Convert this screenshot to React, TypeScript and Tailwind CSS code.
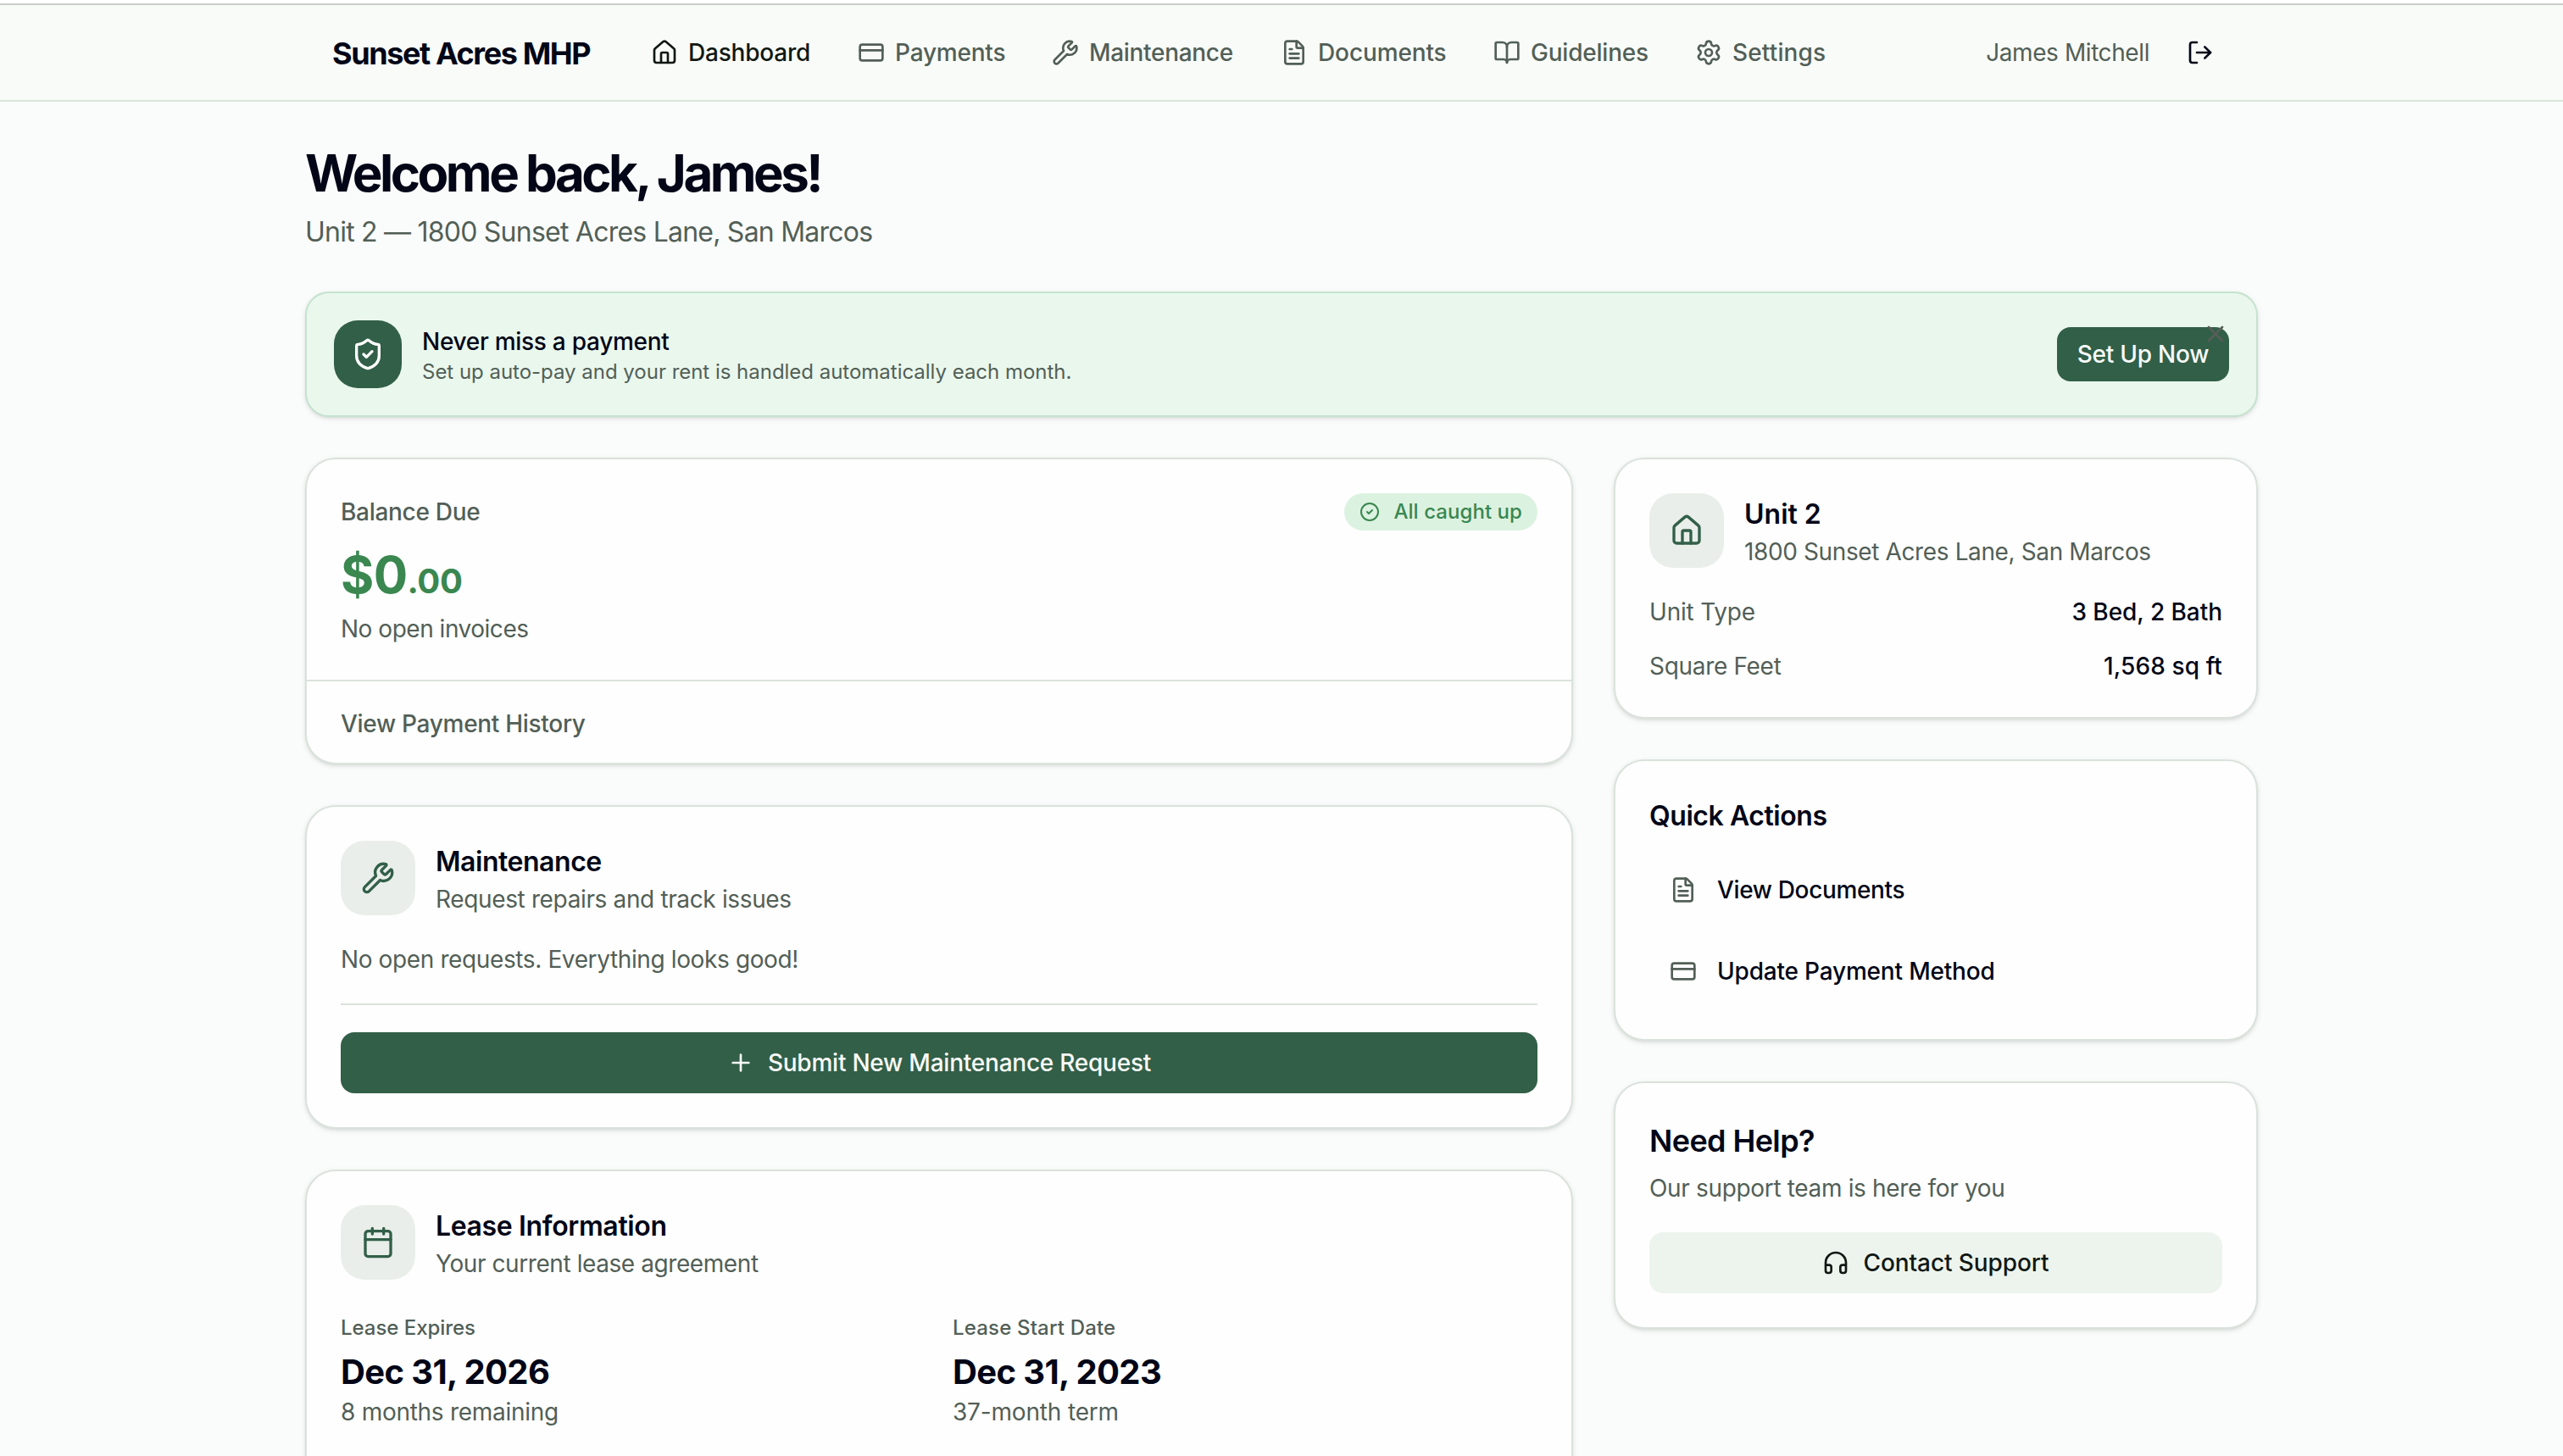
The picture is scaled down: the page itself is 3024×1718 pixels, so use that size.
import type { ReactNode } from "react";
import {
  BookOpen,
  Calendar,
  CircleCheck,
  CreditCard,
  FileText,
  Headphones,
  House,
  LogOut,
  Plus,
  Settings,
  ShieldCheck,
  Wrench,
  X,
} from "lucide-react";
import type { LucideIcon } from "lucide-react";
import clsx from "clsx";

const navItems: { label: string; icon: LucideIcon; text: string; active?: boolean }[] = [
  { label: "Dashboard", icon: House, text: "w-[144px] tracking-[-0.2px]", active: true },
  { label: "Payments", icon: CreditCard, text: "w-[129px] tracking-[-0.2px]" },
  { label: "Maintenance", icon: Wrench, text: "w-[170px] tracking-[-0.31px]" },
  { label: "Documents", icon: FileText, text: "w-[151px] tracking-[-0.12px]" },
  { label: "Guidelines", icon: BookOpen, text: "w-[138px] tracking-[-0.22px]" },
  { label: "Settings", icon: Settings, text: "w-[111px] tracking-[0.15px]" },
];

function Header() {
  return (
    <header className="border-t-2 border-b-2 border-t-[#cbcccb] border-b-[#d9e4db] bg-[#f9fbf8]">
      <div className="mx-auto flex h-28 max-w-[2304px] items-center px-8">
        <div className="w-[376px] pt-0.5 text-[36px] leading-none font-bold tracking-[-1.4px] whitespace-nowrap">
          Sunset Acres MHP
        </div>
        <nav className="flex items-center gap-14">
          {navItems.map(({ label, icon: Icon, text, active }) => (
            <a
              key={label}
              className={clsx(
                "flex items-center gap-3 text-[28px] leading-10 font-medium",
                active ? "text-[#111813]" : "text-[#525f57]",
              )}
            >
              <Icon className="size-8" />
              <span className={clsx("whitespace-nowrap", text)}>{label}</span>
            </a>
          ))}
        </nav>
        <div className="ml-auto flex items-center gap-11 pr-5">
          <span className="text-[28px] leading-10 tracking-[-0.41px] text-[#525f57]">James Mitchell</span>
          <LogOut className="size-8" />
        </div>
      </div>
    </header>
  );
}

function AutoPayBanner() {
  return (
    <section className="relative mt-[46px] flex items-center gap-6 rounded-[28px] border-2 border-[#c4e3ce] bg-[#eaf7ed] p-8 shadow-[0_2px_6px_rgba(0,0,0,0.1),0_2px_4px_-2px_rgba(0,0,0,0.1)]">
      <div className="flex size-20 items-center justify-center rounded-[28px] bg-[#325f48] text-white">
        <ShieldCheck className="size-10" />
      </div>
      <div className="pt-px">
        <p className="text-[28px] leading-10 font-medium tracking-[-0.28px]">Never miss a payment</p>
        <p className="text-2xl leading-8 tracking-[-0.02px] text-[#525f57]">
          Set up auto-pay and your rent is handled automatically each month.
        </p>
      </div>
      <button className="ml-auto h-16 w-[203px] rounded-2xl bg-[#325f48] text-center text-[28px] font-medium tracking-[-0.23px] whitespace-nowrap text-[#f8fbf8]">
        Set Up Now
      </button>
      <X className="absolute top-8 right-8 size-8 text-[#565d57]" />
    </section>
  );
}

function Card({ className, children }: { className?: string; children: ReactNode }) {
  return (
    <section
      className={clsx(
        "rounded-[36px] border-2 border-[#dae2dc] bg-[#fefefe] shadow-[0_2px_6px_rgba(0,0,0,0.1),0_2px_4px_-2px_rgba(0,0,0,0.1)]",
        className,
      )}
    >
      {children}
    </section>
  );
}

function CardTitle({
  icon: Icon,
  title,
  titleTracking,
  subtitle,
  subtitleTracking,
}: {
  icon: LucideIcon;
  title: string;
  titleTracking: string;
  subtitle: string;
  subtitleTracking: string;
}) {
  return (
    <div className="flex items-center gap-6">
      <div className="flex size-[88px] items-center justify-center rounded-[28px] bg-[#e9eeea] text-[#325f48]">
        <Icon className="size-10" />
      </div>
      <div className="whitespace-nowrap">
        <h2 className={clsx("text-[32px] leading-[50px] font-semibold", titleTracking)}>{title}</h2>
        <p className={clsx("text-[28px] leading-[38px] text-[#525f57]", subtitleTracking)}>{subtitle}</p>
      </div>
    </div>
  );
}

function BalanceCard() {
  return (
    <Card>
      <div className="p-10">
        <div className="flex items-center justify-between">
          <span className="text-[28px] leading-10 font-medium tracking-[-0.3px] text-[#525f57]">Balance Due</span>
          <span className="flex h-11 items-center gap-4 rounded-full bg-[#dcf2e0] px-[18px] text-2xl font-medium tracking-[0.06px] text-[#3a8750]">
            <CircleCheck className="size-6" />
            All caught up
          </span>
        </div>
        <p className="mt-4 h-[72px] text-[60px] leading-[72px] font-bold tracking-[-0.6px] text-[#3a8750]">
          $0<span className="text-[40px] tracking-[-0.4px]">.00</span>
        </p>
        <p className="mt-2 text-[28px] leading-10 tracking-[-0.48px] text-[#525f57]">No open invoices</p>
      </div>
      <div className="flex h-[98px] items-center border-t-2 border-[#dae2dc] px-10 pt-1">
        <a className="text-[28px] leading-10 font-medium tracking-[-0.3px] text-[#525f57]">View Payment History</a>
      </div>
    </Card>
  );
}

function MaintenanceCard() {
  return (
    <Card className="p-10">
      <CardTitle
        icon={Wrench}
        title="Maintenance"
        titleTracking="tracking-[-0.46px]"
        subtitle="Request repairs and track issues"
        subtitleTracking="tracking-[-0.36px]"
      />
      <p className="mt-8 text-[28px] leading-10 tracking-[-0.38px] text-[#525f57]">
        No open requests. Everything looks good!
      </p>
      <div className="mt-8 border-t-2 border-[#dae2dc] pt-8">
        <button className="flex h-[72px] w-full items-center justify-center gap-4 rounded-2xl bg-[#325f48] text-[28px] font-medium tracking-[-0.23px] text-[#f8fbf8]">
          <Plus className="size-8" />
          Submit New Maintenance Request
        </button>
      </div>
    </Card>
  );
}

function LeaseCard() {
  const terms = [
    {
      label: "Lease Expires",
      labelTracking: "tracking-[-0.04px]",
      date: "Dec 31, 2026",
      note: "8 months remaining",
      noteTracking: "tracking-[-0.28px]",
    },
    {
      label: "Lease Start Date",
      labelTracking: "tracking-[0.17px]",
      date: "Dec 31, 2023",
      note: "37-month term",
      noteTracking: "tracking-[-0.17px]",
    },
  ];
  return (
    <Card className="h-[480px] p-10">
      <CardTitle
        icon={Calendar}
        title="Lease Information"
        titleTracking="tracking-[-0.36px]"
        subtitle="Your current lease agreement"
        subtitleTracking="tracking-[-0.42px]"
      />
      <div className="mt-10 grid grid-cols-2 gap-8">
        {terms.map((t) => (
          <div key={t.label}>
            <p className={clsx("text-2xl leading-[34px] font-medium text-[#525f57]", t.labelTracking)}>{t.label}</p>
            <p className="mt-1.5 text-[40px] leading-[58px] font-bold tracking-[-0.62px]">{t.date}</p>
            <p className={clsx("text-[28px] leading-[37px] text-[#525f57]", t.noteTracking)}>{t.note}</p>
          </div>
        ))}
      </div>
    </Card>
  );
}

function UnitCard() {
  return (
    <Card className="p-10">
      <CardTitle
        icon={House}
        title="Unit 2"
        titleTracking="tracking-normal"
        subtitle="1800 Sunset Acres Lane, San Marcos"
        subtitleTracking="tracking-[-0.38px]"
      />
      <dl className="mt-8 grid gap-6 text-[28px] leading-10">
        <div className="flex justify-between">
          <dt className="tracking-[-0.2px] text-[#525f57]">Unit Type</dt>
          <dd className="font-medium tracking-[-0.05px]">3 Bed, 2 Bath</dd>
        </div>
        <div className="flex justify-between">
          <dt className="tracking-[-0.31px] text-[#525f57]">Square Feet</dt>
          <dd className="font-medium tracking-[0.1px]">1,568 sq ft</dd>
        </div>
      </dl>
    </Card>
  );
}

function QuickActionsCard() {
  return (
    <Card className="p-10">
      <h2 className="text-[32px] leading-[50px] font-semibold tracking-[-0.45px]">Quick Actions</h2>
      <div className="mt-[22px] grid gap-4 text-[28px] font-medium">
        <a className="flex h-20 items-center gap-6 px-6 tracking-[-0.36px]">
          <FileText className="size-8 text-[#525f57]" />
          View Documents
        </a>
        <a className="flex h-20 items-center gap-6 px-6 tracking-[-0.19px]">
          <CreditCard className="size-8 text-[#525f57]" />
          Update Payment Method
        </a>
      </div>
    </Card>
  );
}

function HelpCard() {
  return (
    <Card className="p-10">
      <h2 className="text-[36px] leading-[56px] font-semibold tracking-[-0.6px]">Need Help?</h2>
      <p className="mt-2 text-[28px] leading-10 tracking-[-0.34px] text-[#525f57]">Our support team is here for you</p>
      <button className="mt-8 flex h-[72px] w-full items-center justify-center gap-4 rounded-2xl bg-[#edf4ee] text-[28px] font-medium tracking-[-0.08px] text-[#111813]">
        <Headphones className="size-8" />
        Contact Support
      </button>
    </Card>
  );
}

export default function App() {
  return (
    <div className="h-[1718px] overflow-hidden bg-[#fafcfb] font-['Inter',sans-serif] text-[#020617] antialiased">
      <div className="h-1 bg-white" />
      <Header />
      <main className="mx-auto max-w-[2304px] pt-12">
        <h1 className="text-[60px] leading-[72px] font-bold tracking-[-3.5px]">Welcome back, James!</h1>
        <p className="mt-[10px] text-[32px] leading-[48px] tracking-[-0.77px] text-[#525f57]">
          Unit 2 — 1800 Sunset Acres Lane, San Marcos
        </p>
        <AutoPayBanner />
        <div className="mt-12 grid grid-cols-[1496px_760px] items-start gap-12">
          <div className="grid gap-12">
            <BalanceCard />
            <MaintenanceCard />
            <LeaseCard />
          </div>
          <div className="grid gap-12">
            <UnitCard />
            <QuickActionsCard />
            <HelpCard />
          </div>
        </div>
      </main>
    </div>
  );
}
